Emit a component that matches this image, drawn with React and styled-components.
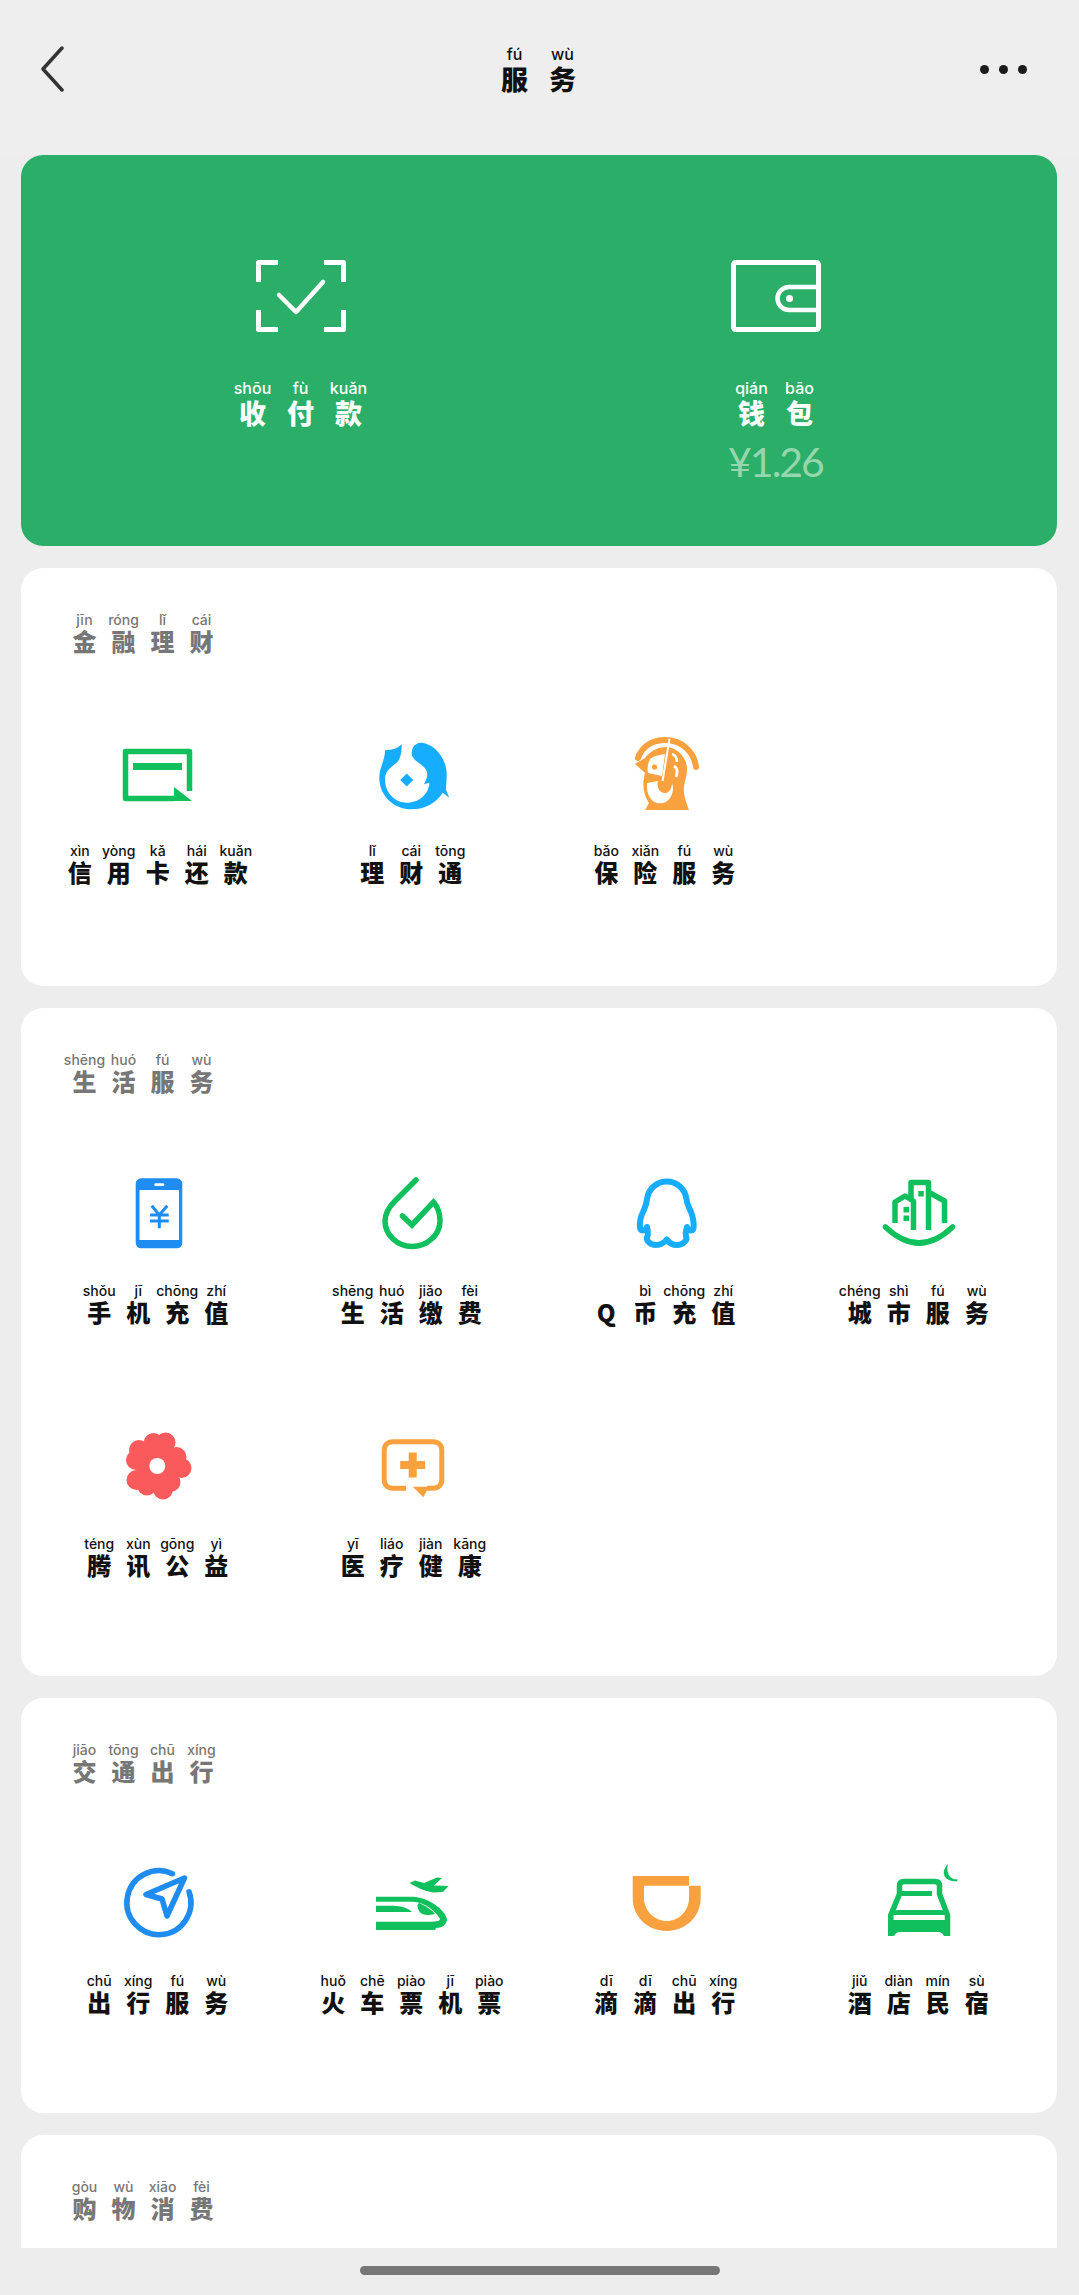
import React from 'react';
import styled, { createGlobalStyle } from 'styled-components';

const GlobalStyle = createGlobalStyle`
    html, body {
        margin: 0;
        padding: 0;
        background: #ededed;
    }
    body {
        width: 1079px;
        height: 2295px;
        overflow: hidden;
        font-family: 'Noto Sans CJK SC', 'Noto Sans', sans-serif;
    }
`;

const Pagina = styled.div`
    width: 1079px;
    height: 2295px;
    display: flex;
    flex-direction: column;
    background: #ededed;
`;

const Cabecalho = styled.header`
    height: 155px;
    box-sizing: border-box;
    padding: 44px 42px 61px 40px;
    display: grid;
    grid-template-columns: 1fr auto 1fr;
    align-items: center;
    background: #eeeeee;
`;

const Pontos = styled.div`
    justify-self: end;
    margin-right: 10px;
    display: flex;
    gap: 10px;
    span {
        width: 9px;
        height: 9px;
        border-radius: 50%;
        background: #1b1b1b;
    }
`;

const Conteudo = styled.main`
    height: 2093px;
    flex: none;
    overflow: hidden;
    box-sizing: border-box;
    padding: 0 22px 0 21px;
    display: flex;
    flex-direction: column;
    gap: 22px;
`;

const CartaoVerde = styled.section`
    height: 391px;
    flex: none;
    box-sizing: border-box;
    padding: 105px 44px 0 42px;
    display: grid;
    grid-template-columns: 1fr 1fr;
    border-radius: 22px;
    background: #2bae67;
`;

const ItemVerde = styled.div`
    display: flex;
    flex-direction: column;
    align-items: center;
    svg {
        margin-bottom: 46px;
    }
`;

const Saldo = styled.div`
    margin-top: 12px;
    font-family: Lato, sans-serif;
    font-weight: 400;
    font-size: 41px;
    line-height: 44px;
    letter-spacing: -2px;
    color: #95d6ae;
`;

const Cartao = styled.section`
    flex: none;
    box-sizing: border-box;
    height: ${(props) => props.$altura}px;
    padding: 43px 12px 0 10px;
    border-radius: 22px;
    background: #ffffff;
`;

const TituloSecao = styled.div`
    padding-left: 34px;
    margin-bottom: 78px;
`;

const Grade = styled.div`
    display: grid;
    grid-template-columns: repeat(4, 1fr);
    row-gap: 100px;
`;

const Item = styled.div`
    display: flex;
    flex-direction: column;
    align-items: center;
    gap: 27px;
`;

const Frase = styled.div`
    display: flex;
    color: ${(props) => props.$cor};
`;

const Unidade = styled.div`
    width: ${(props) => (props.$grande ? 48 : 39)}px;
    display: flex;
    flex-direction: column;
    align-items: center;
`;

const Pinyin = styled.span`
    height: ${(props) => (props.$grande ? 20 : 18)}px;
    font-family: Inter, 'Noto Sans', sans-serif;
    font-weight: 500;
    font-size: ${(props) => (props.$grande ? 16 : 14)}px;
    line-height: ${(props) => (props.$grande ? 20 : 18)}px;
    white-space: nowrap;
`;

const Han = styled.span`
    height: ${(props) => (props.$grande ? 30 : 24)}px;
    font-family: 'Noto Sans CJK SC', sans-serif;
    font-weight: 900;
    font-size: ${(props) => (props.$grande ? 27 : 24)}px;
    line-height: ${(props) => (props.$grande ? 30 : 24)}px;
    white-space: nowrap;
`;

const Rodape = styled.footer`
    flex: 1;
    padding-top: 18px;
    display: flex;
    justify-content: center;
    align-items: flex-start;
    background: #ededed;
`;

const BarraInicio = styled.div`
    width: 360px;
    height: 9px;
    border-radius: 5px;
    background: #777777;
`;

const VERDE = '#0fc05d';
const AZUL = '#1e8cf0';
const CIANO = '#17adff';
const LARANJA = '#f9a03f';
const CORAL = '#fb5a5c';

const Icone = ({ children }) => (
    <svg width="84" height="84" viewBox="0 0 84 84" fill="none">
        {children}
    </svg>
);

// cada petala tem dois lobos
const petalas = [
    [37.5, 19], [49.5, 18.5], [60.5, 33], [65.5, 44], [54.5, 58],
    [47, 65.5], [31, 61.5], [20.5, 56], [20, 36], [23, 26],
];

const icones = {
    cartao: (
        <Icone>
            <path d="M73.5 60V20.5H9.5V67.5H58" stroke={VERDE} strokeWidth="5.5" strokeLinejoin="round" />
            <rect x="17" y="32" width="49" height="7" fill={VERDE} />
            <path d="M58 56L76 70H58Z" fill={VERDE} />
        </Icone>
    ),
    peixe: (
        <Icone>
            <path
                d="M16 19.3C22 19 28 18 32.7 13.3C33 22 31 27 29.3 30C24 36 16 38 16 48.3C16 62 26 71.7 37.7 71.7C50 71.7 60 63 60.3 51.7L55 53.3C58 48 59 44 57.7 40C55 33 42 30 42.7 21.7C43 15 47 11.7 52.7 11.7C66 13 77.7 28 77.7 43C77.7 50 77 56 77 59L80.3 66.7L73.7 61.7C67 72 56 78.3 42.7 78.3C24 78.3 10.3 64 10.3 46.7C10.3 36 16 30 16 19.3Z"
                fill={CIANO}
            />
            <path d="M37.7 42.5L44.2 49L37.7 55.5L31.2 49Z" fill={CIANO} />
        </Icone>
    ),
    seguro: (
        <Icone>
            <g transform="translate(2 0)">
                <path d="M13 27C17 15 28 9 40 9C56 9 69 20 71 36" stroke={LARANJA} strokeWidth="6" strokeLinecap="round" />
                <path
                    d="M10 33L20 27C26 19 34 16 42 16C53 17 62 27 62 38C62 48 58 52 59 62C60 69 62 74 64 79H20L24 72C18 64 17 52 20 42Z"
                    fill={LARANJA}
                />
                <path d="M25 28C29 25 34 24 40 23L37 45L23 42C22 37 23 32 25 28Z" fill="#fff" />
                <circle cx="29.5" cy="36" r="2.6" fill={LARANJA} />
                <path d="M22 52L33 50C31 56 35 63 41 62C45 61 47 56 47 52C50 60 46 70 38 72C28 74 21 66 22 52Z" fill="#fff" />
                <path d="M44.5 8L37.5 50" stroke="#fff" strokeWidth="2" />
                <path d="M47 23C50 24 52 27 52 31" stroke="#fff" strokeWidth="2.5" />
                <path d="M49 35C52 37 53 41 51 46" stroke="#fff" strokeWidth="3" />
            </g>
        </Icone>
    ),
    celular: (
        <Icone>
            <rect x="19.7" y="7.3" width="46.6" height="70" rx="5.5" fill={AZUL} />
            <rect x="23.5" y="19" width="39.5" height="50" fill="#fff" />
            <rect x="38.3" y="12.3" width="10" height="2.8" rx="1.4" fill="#fff" />
            <path d="M35.7 34.7L43.3 44L51.3 34.7M43.3 44V57.3M34 44H52.7M34 50H52.7" stroke={AZUL} strokeWidth="3" />
        </Icone>
    ),
    gota: (
        <Icone>
            <path
                d="M47 9L26 30C20 36 16 43 16 50C16 64 28.5 75.5 43 75.5C58 75.5 71 64 71 50C71 42 69 36 64.5 31L43 54L33.5 45"
                stroke={VERDE}
                strokeWidth="5.5"
                strokeLinecap="round"
            />
        </Icone>
    ),
    qq: (
        <Icone>
            <path
                d="M43.7 10.5C54 10.5 62 18 63.5 28C64 34 66 36 68 41C70 46 71 52 70.5 57C70 60 66 61 64 56C63 60 62 62 63 65C65 69 60 74 54 74C50 74 46 72 43.7 68.5C41 72 37 74 33 74C27 74 22 69 24.5 65C25.5 62 25 60 24 56C22 61 18 60 17 57C16.5 52 17.5 46 20 41C22 36 23.5 34 24 28C25.5 18 33.5 10.5 43.7 10.5Z"
                stroke={CIANO}
                strokeWidth="6"
                strokeLinejoin="round"
            />
        </Icone>
    ),
    cidade: (
        <Icone>
            <path d="M9.5 56Q43 88 76.5 56" stroke={VERDE} strokeWidth="5.5" strokeLinecap="round" />
            <path
                d="M19 52V31L29 25L37.5 30V59M35 27V11.5H52.5V59M54 22L68.5 30V52"
                stroke={VERDE}
                strokeWidth="5.5"
                strokeLinejoin="round"
            />
            <rect x="42.3" y="20" width="5.5" height="5.5" fill={VERDE} />
            <rect x="27.5" y="36" width="5.5" height="5.5" fill={VERDE} />
            <rect x="27.5" y="44.5" width="5.5" height="5.5" fill={VERDE} />
        </Icone>
    ),
    flor: (
        <Icone>
            {petalas.map(([x, y]) => (
                <circle key={`${x}-${y}`} cx={x} cy={y} r="10" fill={CORAL} />
            ))}
            <circle cx="41.3" cy="42" r="21" fill={CORAL} />
            <circle cx="41.3" cy="42" r="8" fill="#fff" />
        </Icone>
    ),
    saude: (
        <Icone>
            <path
                d="M37 64.2H24C18.5 64.2 15.2 61 15.2 55.5V26.5C15.2 21 18.5 17.8 24 17.8H64C69.5 17.8 72.8 21 72.8 26.5V55.5C72.8 61 69.5 64.2 64 64.2H58"
                stroke={LARANJA}
                strokeWidth="5"
            />
            <path d="M43.7 62.7H60L54.3 73.3Z" fill={LARANJA} />
            <path d="M39.7 28.5H47.7V37H56.2V45H47.7V53.5H39.7V45H31.2V37H39.7Z" fill={LARANJA} />
        </Icone>
    ),
    navegacao: (
        <Icone>
            <path d="M56.5 12.7A32 32 0 1 0 73 30.8" stroke={AZUL} strokeWidth="5.5" strokeLinecap="round" />
            <path d="M68.5 17L30 33.5L46 38L51 55Z" stroke={AZUL} strokeWidth="5.5" strokeLinejoin="round" />
        </Icone>
    ),
    trem: (
        <Icone>
            <path d="M40.5 22L46 19.5L55 22L68 16.5L73 17L65 24.5L79.5 25L74 31L64 31.5C55 30 47 26 40.5 22Z" fill={VERDE} />
            <path d="M7 35.7H44C58 36 76 48 78 58C78 63 74 67 67 67L66 69H7Z" fill={VERDE} />
            <path d="M7 40.7H44C55 41 67 50 71 58C71 60 68 60.7 60 60.7H7Z" fill="#fff" />
            <path d="M50 42C56 44 64 50 66 53C58 55 52 54 50 50C48 46 48 44 50 42Z" fill={VERDE} />
            <path d="M7 44.7H24C32 45 40 47 43 51H7Z" fill={VERDE} />
        </Icone>
    ),
    didi: (
        <Icone>
            <path
                d="M9.7 15H66V24.7H77.7V37C77.7 56 62 70 43.7 70C25 70 9.7 56 9.7 37ZM21 24.7V37C21 50 32 60 43.7 60C56 60 66 50 66 37V24.7Z"
                fill={LARANJA}
                fillRule="evenodd"
            />
        </Icone>
    ),
    cama: (
        <Icone>
            <path d="M72 3C65 10 66 20 80.7 20.5L82 18.5C73 19 70 11 72 3Z" fill={VERDE} />
            <path d="M14.8 75V54L23.5 33V25Q23.5 20.5 28 20.5H59Q63.5 20.5 63.5 25V33L71.5 54V75" stroke={VERDE} strokeWidth="5.5" />
            <rect x="24" y="30" width="32" height="5" fill={VERDE} />
            <path d="M16 54Q18 49 22 49H65Q69 49 70 54Z" fill={VERDE} />
            <path d="M12.3 59H74V75H68Q66 71 62 71H24Q20 71 18 75H12.3Z" fill={VERDE} />
        </Icone>
    ),
};

const secoes = [
    {
        titulo: [['jīn', '金'], ['róng', '融'], ['lǐ', '理'], ['cái', '财']],
        altura: 418,
        itens: [
            { icone: 'cartao', texto: [['xìn', '信'], ['yòng', '用'], ['kǎ', '卡'], ['hái', '还'], ['kuǎn', '款']] },
            { icone: 'peixe', texto: [['lǐ', '理'], ['cái', '财'], ['tōng', '通']] },
            { icone: 'seguro', texto: [['bǎo', '保'], ['xiǎn', '险'], ['fú', '服'], ['wù', '务']] },
        ],
    },
    {
        titulo: [['shēng', '生'], ['huó', '活'], ['fú', '服'], ['wù', '务']],
        altura: 668,
        itens: [
            { icone: 'celular', texto: [['shǒu', '手'], ['jī', '机'], ['chōng', '充'], ['zhí', '值']] },
            { icone: 'gota', texto: [['shēng', '生'], ['huó', '活'], ['jiǎo', '缴'], ['fèi', '费']] },
            { icone: 'qq', texto: [['', 'Q'], ['bì', '币'], ['chōng', '充'], ['zhí', '值']] },
            { icone: 'cidade', texto: [['chéng', '城'], ['shì', '市'], ['fú', '服'], ['wù', '务']] },
            { icone: 'flor', texto: [['téng', '腾'], ['xùn', '讯'], ['gōng', '公'], ['yì', '益']] },
            { icone: 'saude', texto: [['yī', '医'], ['liáo', '疗'], ['jiàn', '健'], ['kāng', '康']] },
        ],
    },
    {
        titulo: [['jiāo', '交'], ['tōng', '通'], ['chū', '出'], ['xíng', '行']],
        altura: 415,
        itens: [
            { icone: 'navegacao', texto: [['chū', '出'], ['xíng', '行'], ['fú', '服'], ['wù', '务']] },
            { icone: 'trem', texto: [['huǒ', '火'], ['chē', '车'], ['piào', '票'], ['jī', '机'], ['piào', '票']] },
            { icone: 'didi', texto: [['dī', '滴'], ['dī', '滴'], ['chū', '出'], ['xíng', '行']] },
            { icone: 'cama', texto: [['jiǔ', '酒'], ['diàn', '店'], ['mín', '民'], ['sù', '宿']] },
        ],
    },
    {
        titulo: [['gòu', '购'], ['wù', '物'], ['xiāo', '消'], ['fèi', '费']],
        altura: 300,
        itens: [],
    },
];

function TextoPinyin({ partes, cor, grande }) {
    return (
        <Frase $cor={cor}>
            {partes.map(([pinyin, han], i) => (
                <Unidade key={i} $grande={grande}>
                    <Pinyin $grande={grande}>{pinyin}</Pinyin>
                    <Han $grande={grande}>{han}</Han>
                </Unidade>
            ))}
        </Frase>
    );
}

function App() {
    return (
        <Pagina>
            <GlobalStyle />
            <Cabecalho>
                <svg width="24" height="46" viewBox="0 0 24 46" fill="none">
                    <path d="M22 2L3 23L22 44" stroke="#333" strokeWidth="3.5" strokeLinecap="round" strokeLinejoin="round" />
                </svg>
                <TextoPinyin partes={[['fú', '服'], ['wù', '务']]} cor="#111" grande />
                <Pontos>
                    <span />
                    <span />
                    <span />
                </Pontos>
            </Cabecalho>
            <Conteudo>
                <CartaoVerde>
                    <ItemVerde>
                        <svg width="90" height="72" viewBox="0 0 90 72" fill="none">
                            <path
                                d="M2.5 22V2.5H22M68 2.5H87.5V22M2.5 50V69.5H22M68 69.5H87.5V50"
                                stroke="#fff"
                                strokeWidth="5"
                                strokeLinejoin="round"
                            />
                            <path d="M23 35L40 52L67 22" stroke="#fff" strokeWidth="4.5" strokeLinecap="round" strokeLinejoin="round" />
                        </svg>
                        <TextoPinyin partes={[['shōu', '收'], ['fù', '付'], ['kuǎn', '款']]} cor="#fff" grande />
                    </ItemVerde>
                    <ItemVerde>
                        <svg width="90" height="72" viewBox="0 0 90 72" fill="none">
                            <rect x="2.5" y="2.5" width="85" height="67" rx="2" stroke="#fff" strokeWidth="5" />
                            <path d="M88 27H58A11.5 11.5 0 0 0 58 50H88" stroke="#fff" strokeWidth="4.5" />
                            <circle cx="58.5" cy="38.5" r="3.5" fill="#fff" />
                        </svg>
                        <TextoPinyin partes={[['qián', '钱'], ['bāo', '包']]} cor="#fff" grande />
                        <Saldo>¥1.26</Saldo>
                    </ItemVerde>
                </CartaoVerde>
                {secoes.map((secao) => (
                    <Cartao key={secao.titulo[0][1]} $altura={secao.altura}>
                        <TituloSecao>
                            <TextoPinyin partes={secao.titulo} cor="#777" />
                        </TituloSecao>
                        <Grade>
                            {secao.itens.map((item) => (
                                <Item key={item.icone}>
                                    {icones[item.icone]}
                                    <TextoPinyin partes={item.texto} cor="#111" />
                                </Item>
                            ))}
                        </Grade>
                    </Cartao>
                ))}
            </Conteudo>
            <Rodape>
                <BarraInicio />
            </Rodape>
        </Pagina>
    );
}

export default App;
